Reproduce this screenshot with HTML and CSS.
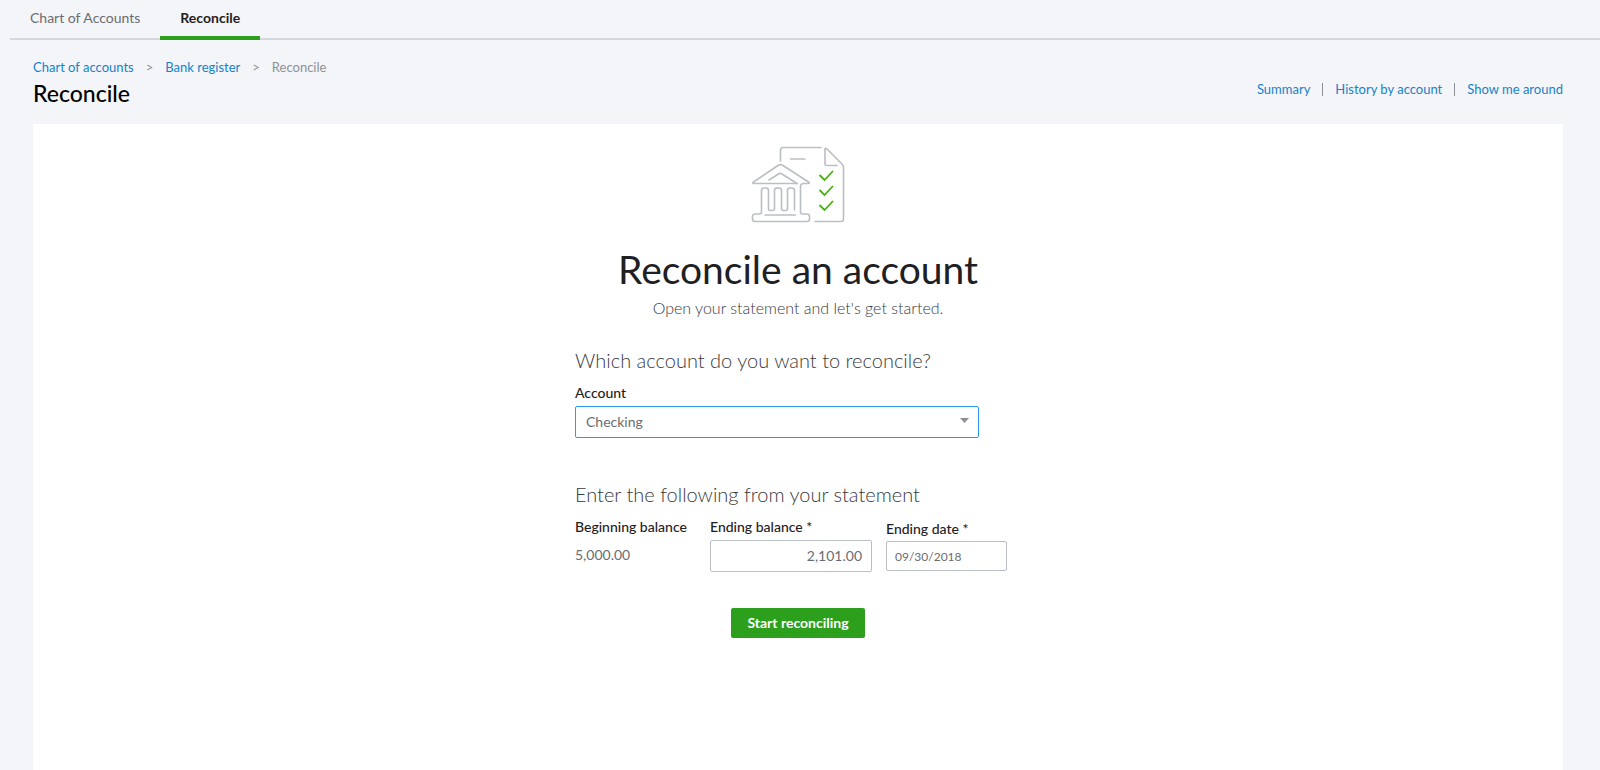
FILE: index.html
```html
<!DOCTYPE html>
<html lang="en">
<head>
<meta charset="utf-8">
<title>Reconcile</title>
<link rel="stylesheet" href="styles.css">
</head>
<body>
<nav class="tabs">
  <a class="tab" href="#">Chart of Accounts</a>
  <a class="tab tab-active" href="#" aria-current="page">Reconcile</a>
</nav>
<header class="page-header">
  <div>
    <nav class="breadcrumb" aria-label="Breadcrumb">
      <a href="#">Chart of accounts</a><span>&gt;</span><a href="#">Bank register</a><span>&gt;</span><span>Reconcile</span>
    </nav>
    <h1 class="page-title">Reconcile</h1>
  </div>
  <nav class="page-links">
    <a href="#">Summary</a><span class="divider"></span><a href="#">History by account</a><span class="divider"></span><a href="#">Show me around</a>
  </nav>
</header>
<main class="panel">
  <svg class="illustration" viewBox="0 0 94 78" width="94" height="78" fill="none" aria-hidden="true">
    <g stroke="#babec5" stroke-width="1.6" stroke-linecap="round" stroke-linejoin="round">
      <path d="M29.500 15V4.500a3 3 0 0 1 3-3H70"/>
      <path d="M74 3v14.500a2 2 0 0 0 2 2H86"/>
      <path d="M74 3c0-1 1-1 2 0l15 15c1 1 1.500 2 1.500 3V73a2.500 2.500 0 0 1-2.500 2.500H64"/>
      <path d="M39.500 13H54"/>
      <path d="M46 37.500H2.500c-1 0-1-1 0-1.500L27 19.500c2-1.500 3-1.500 5 0L57.500 36c1 .5 1 1.500 0 1.500H52.500a3 3 0 0 0-3 3V66a2 2 0 0 0 2 2H56a2.500 2.500 0 0 1 2.500 2.500V73a2.500 2.500 0 0 1-2.500 2.500H4A2.500 2.500 0 0 1 1.500 73V70.500A2.500 2.500 0 0 1 4 68H8.500a2 2 0 0 0 2-2V44.500a2.500 2.500 0 0 1 2.500-2.500H15a2.500 2.500 0 0 1 2.500 2.500V62.500a2 2 0 0 0 2 2H21.500a2 2 0 0 0 2-2V44.500a2.500 2.500 0 0 1 2.500-2.500H28a2.500 2.500 0 0 1 2.500 2.500V62.500a2 2 0 0 0 2 2H34.500a2 2 0 0 0 2-2V44.500a2.500 2.500 0 0 1 2.500-2.500H41a2.500 2.500 0 0 1 2.500 2.500V64"/>
      <path d="M46 37.500L31 28c-1.500-1-2-1-3.500 0L18 34"/>
      <path d="M14 69H44.500"/>
    </g>
    <g stroke="#44b210" stroke-width="1.800">
      <path d="M68.500 29l5 5 8.500-9M68.500 44l5 5 8.500-9M68.500 59l5 5 8.500-9"/>
    </g>
  </svg>
  <h2 class="headline">Reconcile an account</h2>
  <p class="intro">Open your statement and let's get started.</p>
  <form class="form">
    <h3 class="question">Which account do you want to reconcile?</h3>
    <div class="field account-field">
      <label for="account">Account</label>
      <div class="select-wrap">
        <select id="account"><option>Checking</option></select>
        <svg class="caret" viewBox="0 0 9 5" width="9" height="5" aria-hidden="true"><path d="M0 0h9L4.500 5z" fill="#8d9096"/></svg>
      </div>
    </div>
    <h3 class="question">Enter the following from your statement</h3>
    <div class="statement">
      <div class="field beginning">
        <span class="label">Beginning balance</span>
        <span class="amount">5,000.00</span>
      </div>
      <div class="field ending">
        <label for="ending-balance">Ending balance *</label>
        <input id="ending-balance" class="input-balance" type="text" value="2,101.00">
      </div>
      <div class="field date">
        <label for="ending-date">Ending date *</label>
        <input id="ending-date" class="input-date" type="text" value="09/30/2018">
      </div>
    </div>
    <button class="submit" type="button">Start reconciling</button>
  </form>
</main>
</body>
</html>
```
FILE: styles.css
```css
* { box-sizing: border-box; }

body {
  margin: 0;
  min-height: 100vh;
  display: flex;
  flex-direction: column;
  background: #f4f5f8;
  color: #393a3d;
  font: 14px/20px Lato, "Liberation Sans", sans-serif;
}

a { color: #1482cc; text-decoration: none; }

h1, h2, h3, p { margin: 0; }

.tabs {
  display: flex;
  height: 40px;
  margin-left: 10px;
  border-bottom: 2px solid #d4d7dc;
}

.tab {
  height: 40px;
  padding: 8px 20px 0;
  color: #6b6c72;
}

.tab-active {
  border-bottom: 4px solid #2ca01c;
  color: #1f2023;
  font-weight: 700;
}

.page-header {
  display: flex;
  justify-content: space-between;
  height: 84px;
  padding: 17px 37px 0 33px;
}

.breadcrumb {
  display: flex;
  gap: 12px;
  color: #8d9096;
  font-size: 13px;
}

.page-title {
  color: #000;
  font-size: 23px;
  font-weight: 500;
  line-height: 32px;
}

.page-links {
  display: flex;
  align-items: center;
  height: 20px;
  margin-top: 22px;
  font-size: 13px;
}

.divider {
  width: 1px;
  height: 13px;
  margin: 0 12px;
  background: #8d9096;
}

.panel {
  flex: 1;
  display: flex;
  flex-direction: column;
  align-items: center;
  margin: 0 37px 0 33px;
  padding: 22px 0 40px;
  background: #fff;
}

.headline {
  margin-top: 19px;
  color: #1f2023;
  font-size: 39px;
  font-weight: 400;
  line-height: 52px;
}

.intro {
  margin-top: 3px;
  color: #393a3d;
  font-size: 16px;
  font-weight: 300;
}

.form {
  display: flex;
  flex-direction: column;
  width: 446px;
  max-width: 100%;
  margin-top: 30px;
}

.question {
  color: #393a3d;
  font-size: 20px;
  font-weight: 300;
  line-height: 24px;
}

.field {
  display: flex;
  flex-direction: column;
}

label, .label { color: #1f2023; font-weight: 500; }

.account-field {
  width: 404px;
  max-width: 100%;
  margin: 11px 0 44px;
}

.select-wrap {
  position: relative;
  margin-top: 3px;
}

select, input {
  width: 100%;
  height: 32px;
  border: 1px solid #babec5;
  border-radius: 2px;
  background: #fff;
  color: #6b6c72;
  font: inherit;
}

select {
  padding: 0 10px;
  border-color: #2b9be5;
  appearance: none;
}

.caret {
  position: absolute;
  top: 12px;
  right: 10px;
}

.statement {
  display: flex;
  margin-top: 11px;
}

.beginning { width: 135px; }
.ending { width: 162px; margin-right: 14px; }
.date { width: 121px; padding-top: 2px; }

.amount {
  margin-top: 8px;
  color: #6b6c72;
}

.input-balance {
  margin-top: 3px;
  padding: 0 9px 1px;
  text-align: right;
}

.input-date {
  height: 30px;
  margin-top: 2px;
  padding: 0 8px;
  font-size: 12px;
}

.submit {
  align-self: center;
  width: 134px;
  height: 30px;
  margin-top: 36px;
  padding: 0 0 1px;
  border: 0;
  border-radius: 2px;
  background: #2ca01c;
  color: #fff;
  font: inherit;
  font-weight: 700;
}
```
